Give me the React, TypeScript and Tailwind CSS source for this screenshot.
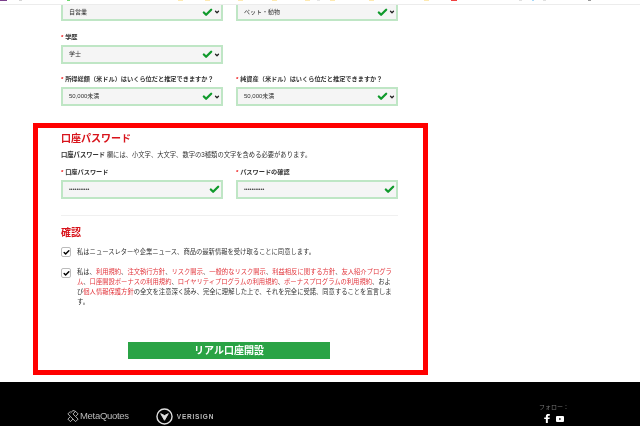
import { Check, ChevronDown } from "lucide-react";

const font = { fontFamily: '"Liberation Sans", "Noto Sans CJK JP", sans-serif' };

// leftover browser toolbar pixels along the top edge: [gap, width, colour]
const specks: [number, number, string][] = [
  [0, 7, "#7b3f8c"],
  [12, 3, "#d5d5d5"],
  [45, 3, "#6fd86f"],
  [108, 5, "#fde9b0"],
  [22, 5, "#fde9b0"],
  [28, 5, "#fde9b0"],
  [29, 5, "#fde9b0"],
  [28, 5, "#fde9b0"],
  [7, 3, "#e5e5e5"],
  [10, 5, "#fde9b0"],
  [34, 5, "#fde9b0"],
  [50, 5, "#fde9b0"],
  [22, 6, "#f04040"],
  [62, 3, "#e0e0e0"],
  [10, 2, "#a8d8f8"],
  [9, 3, "#e0e0e0"],
  [42, 3, "#999999"],
];

function Label({ text }: { text: string }) {
  return (
    <div className="mb-[3px] h-[10px] w-[162px] text-[6.2px] leading-[10px] font-bold whitespace-nowrap text-[#333]">
      <span className="text-[#e11]">* </span>
      {text}
    </div>
  );
}

function Field({ value, select, password }: { value: string; select?: boolean; password?: boolean }) {
  return (
    <div className="flex h-[19px] w-[162px] items-center border-2 border-[#bfe6c5] bg-[#f5f5f5] pl-[6px] pr-[1px]">
      <span className={password ? "flex-1 text-[5.300px] text-[#444]" : "flex-1 text-[6px] text-[#333]"}>{value}</span>
      <Check className="h-[11px] w-[11px] text-[#109a2c]" strokeWidth={5} />
      {select && <ChevronDown className="ml-[1px] h-[6px] w-[6px] text-[#222]" strokeWidth={5} />}
    </div>
  );
}

function TopField({ value }: { value: string }) {
  return (
    <div className="flex h-[16px] w-[162px] items-center border-2 border-t-0 border-[#bfe6c5] bg-[#f5f5f5] pl-[6px] pr-[1px]">
      <span className="flex-1 text-[6px] text-[#333]">{value}</span>
      <Check className="h-[11px] w-[11px] text-[#109a2c]" strokeWidth={5} />
      <ChevronDown className="ml-[1px] h-[6px] w-[6px] text-[#222]" strokeWidth={5} />
    </div>
  );
}

function Tick() {
  return (
    <div className="flex h-[10px] w-[10px] shrink-0 items-center justify-center rounded-[2px] border border-[#bbb] bg-white">
      <Check className="h-[7px] w-[7px] text-black" strokeWidth={5} />
    </div>
  );
}

function Red({ children }: { children: string }) {
  return <span className="text-[#e2353c]">{children}</span>;
}

export default function App() {
  return (
    <div className="flex h-[426px] w-[640px] flex-col overflow-hidden bg-white blur-[0.3px]" style={font}>
      <div className="h-[5px] shrink-0 border-b border-[#ececec] bg-white">
        <div className="flex h-[1px]">
          {specks.map(([gap, width, color], i) => (
            <div key={i} className="h-full" style={{ marginLeft: gap, width, backgroundColor: color }} />
          ))}
        </div>
      </div>

      <div className="flex flex-col pl-[61px]">
        <div className="flex gap-[13px]">
          <TopField value="自営業" />
          <TopField value="ペット・動物" />
        </div>

        <div className="mt-[11px]">
          <Label text="学歴" />
          <Field value="学士" select />
        </div>

        <div className="mt-[10px] flex gap-[13px]">
          <div>
            <Label text="所得総額（米ドル）はいくら位だと推定できますか？" />
            <Field value="50,000未満" select />
          </div>
          <div>
            <Label text="純資産（米ドル）はいくら位だと推定できますか？" />
            <Field value="50,000未満" select />
          </div>
        </div>
      </div>

      <div className="mt-[17px] ml-[33px] h-[252px] w-[395px] shrink-0 border-[5px] border-[#ff0000] px-[23px] pt-[4px]">
        <h2 className="h-[14px] text-[10px] leading-[14px] font-bold text-[#d8131b]">口座パスワード</h2>
        <p className="mt-[4px] h-[10px] text-[6.3px] leading-[10px] whitespace-nowrap text-[#333]">
          <b>口座パスワード</b> 欄には、小文字、大文字、数字の3種類の文字を含める必要があります。
        </p>

        <div className="mt-[7px] flex gap-[13px]">
          <div>
            <Label text="口座パスワード" />
            <Field value="•••••••••••" password />
          </div>
          <div>
            <Label text="パスワードの確認" />
            <Field value="•••••••••••" password />
          </div>
        </div>

        <div className="mt-[16px] h-px w-[337px] bg-[#f0f0f0]" />

        <h2 className="mt-[10px] h-[14px] text-[10px] leading-[14px] font-bold text-[#d8131b]">確認</h2>

        <div className="mt-[7px] flex items-center gap-[6px]">
          <Tick />
          <p className="text-[6.3px] leading-[10px] whitespace-nowrap text-[#333]">
            私はニュースレターや企業ニュース、商品の最新情報を受け取ることに同意します。
          </p>
        </div>

        <div className="mt-[10px] flex gap-[6px]">
          <div className="mt-[1px]">
            <Tick />
          </div>
          <p className="w-[316px] text-[6.3px] leading-[10px] text-[#333]">
            私は、<Red>利用規約</Red>、<Red>注文執行方針</Red>、<Red>リスク開示</Red>、<Red>一般的なリスク開示</Red>、
            <Red>利益相反に関する方針</Red>、<Red>友人紹介プログラム</Red>、<Red>口座開設ボーナスの利用規約</Red>、
            <Red>ロイヤリティプログラムの利用規約</Red>、<Red>ボーナスプログラムの利用規約</Red>、および
            <Red>個人情報保護方針</Red>の全文を注意深く読み、完全に理解した上で、それを完全に受諾、同意することを宣言します。
          </p>
        </div>

        <button className="mt-[35px] ml-[67px] block h-[17px] w-[202px] bg-[#2aa345] text-[10px] leading-[17px] font-bold text-white">
          リアル口座開設
        </button>
      </div>

      <footer className="mt-[7px] flex flex-1 items-end justify-between bg-black pl-[67px] pr-[71px]">
        <div className="flex items-center pb-[1px]">
          <svg viewBox="0 0 14 14" className="h-[13px] w-[12px]" fill="none" stroke="#ccc" strokeWidth="1">
            <path d="M4 1L1 4l3 3 6 6 3-3-3-3-3-3 3-3-3-1-3 3M10 1l3 3-3 3M4 7L1 10l3 3 3-3" />
          </svg>
          <span className="ml-[1px] text-[9.500px] tracking-[-0.3px] text-[#bbb]">MetaQuotes</span>
          <svg viewBox="0 0 18 18" className="ml-[27px] h-[17px] w-[17px]" fill="none" stroke="#ddd">
            <circle cx="9" cy="9" r="8" strokeWidth="1.500" />
            <path d="M5 6l4 7 4-7-4 2z" fill="#ddd" />
          </svg>
          <span className="ml-[4px] text-[6.500px] font-bold tracking-[0.8px] text-[#bbb]">VERISIGN</span>
        </div>
        <div className="flex flex-col items-center gap-[3px] pb-[3px]">
          <span className="text-[6px] leading-[8px] text-[#777]">フォロー：</span>
          <div className="flex items-center gap-[6px]">
            <svg viewBox="0 0 10 16" className="h-[9px] w-[6px]" fill="#fff">
              <path d="M3 16V9H0V6h3V4c0-3 2-4 4-4h3v3H8C7 3 6.500 3.500 6.500 4.500V6H10l-.5 3h-3v7z" />
            </svg>
            <svg viewBox="0 0 16 12" className="h-[6px] w-[8px]" fill="#fff">
              <path fillRule="evenodd" d="M2 0h12a2 2 0 0 1 2 2v8a2 2 0 0 1-2 2H2a2 2 0 0 1-2-2V2a2 2 0 0 1 2-2zm4.500 3.500v5l4-2.500z" />
            </svg>
          </div>
        </div>
      </footer>
    </div>
  );
}
